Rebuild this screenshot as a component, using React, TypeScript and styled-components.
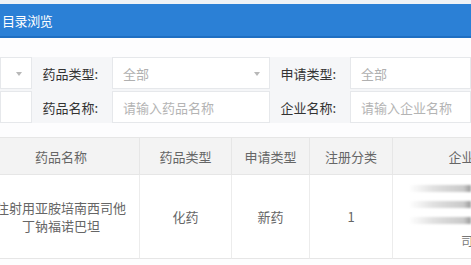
import React from "react";
import styled, { createGlobalStyle } from "styled-components";

const Global = createGlobalStyle`
  html, body { margin: 0; padding: 0; background: #ffffff; }
  body { font-family: "Microsoft YaHei", "Noto Sans CJK SC", "Noto Sans", sans-serif; }
  * { box-sizing: border-box; }
`;

const Page = styled.div`
  width: 471px;
  height: 265px;
  overflow: hidden;
  background: #fdfdfe;
  display: flex;
  flex-direction: column;
  align-items: flex-start;
`;

const TopStrip = styled.div`
  height: 4px;
  width: 100%;
  background: #eef2f6;
  flex: none;
`;

const TitleBar = styled.div`
  height: 34px;
  width: 100%;
  flex: none;
  background: #2b80d6;
  border-bottom: 2px solid #1f6fc2;
  display: flex;
  align-items: center;
  padding-left: 2px;
  color: #ffffff;
  font-size: 13px;
  letter-spacing: -0.4px;
`;

const Filters = styled.div`
  margin-top: 19px;
  width: 100%;
  display: flex;
  flex-direction: column;
  gap: 2px;
  background: #f5f6f8;
  flex: none;
`;

const FilterRow = styled.div`
  display: grid;
  grid-template-columns: 32px 80px 158px 80px 1fr;
  height: 32px;
`;

const Input = styled.div<{ $placeholder?: boolean }>`
  background: #ffffff;
  border: 1px solid #e6e8eb;
  display: flex;
  align-items: center;
  padding-left: 10px;
  position: relative;
  font-size: 13px;
  color: ${(p) => (p.$placeholder ? "#b4b4b4" : "#b0b0b0")};
  white-space: nowrap;
  overflow: hidden;
`;

const Arrow = styled.span`
  position: absolute;
  right: 9px;
  top: 14px;
  width: 0;
  height: 0;
  border-left: 3px solid transparent;
  border-right: 3px solid transparent;
  border-top: 4px solid #b8b8b8;
`;

const Label = styled.div`
  display: flex;
  align-items: center;
  justify-content: flex-end;
  padding-right: 14px;
  font-size: 13px;
  color: #333333;
  white-space: nowrap;
`;

const Table = styled.div`
  margin-top: 14px;
  margin-left: -17px;
  display: grid;
  grid-template-columns: 157px 92px 78px 83px 164px;
  width: max-content;
  flex: none;
  border-top: 1px solid #e6e6e6;
`;

const HeadCell = styled.div`
  height: 37px;
  background: #f3f3f3;
  border-right: 1px solid #e6e6e6;
  border-bottom: 1px solid #e6e6e6;
  display: flex;
  align-items: center;
  justify-content: center;
  font-size: 13px;
  color: #666666;
  white-space: nowrap;
`;

const BodyCell = styled.div`
  height: 84px;
  background: #ffffff;
  border-right: 1px solid #ececec;
  border-bottom: 1px solid #e6e6e6;
  display: flex;
  align-items: center;
  justify-content: center;
  text-align: center;
  font-size: 13px;
  line-height: 18px;
  color: #666666;
  padding: 0 10px;
`;

const CompanyCell = styled(BodyCell)`
  flex-direction: column;
  align-items: flex-end;
  justify-content: flex-start;
  padding: 10px 0 0 0;
  gap: 9px;
  border-right: none;
`;

const Blur = styled.div<{ $w: number }>`
  height: 7px;
  width: ${(p) => p.$w}px;
  background: linear-gradient(90deg, rgba(220, 220, 220, 0) 0%, #e0e0e0 40%, #c9c9c9 88%, #9a9a9a 100%);
  filter: blur(1px);
  margin-right: 86px;
`;

const Tail = styled.span`
  margin-right: 84px;
  margin-top: 1px;
  font-size: 12px;
  color: #777777;
  line-height: 14px;
`;

export default function App() {
  return (
    <>
      <Global />
      <Page>
        <TopStrip />
        <TitleBar>目录浏览</TitleBar>
        <Filters>
          <FilterRow>
            <Input>
              <Arrow />
            </Input>
            <Label>药品类型:</Label>
            <Input>
              全部
              <Arrow />
            </Input>
            <Label>申请类型:</Label>
            <Input>全部</Input>
          </FilterRow>
          <FilterRow>
            <Input />
            <Label>药品名称:</Label>
            <Input $placeholder>请输入药品名称</Input>
            <Label>企业名称:</Label>
            <Input $placeholder>请输入企业名称</Input>
          </FilterRow>
        </Filters>
        <Table>
          <HeadCell>药品名称</HeadCell>
          <HeadCell>药品类型</HeadCell>
          <HeadCell>申请类型</HeadCell>
          <HeadCell>注册分类</HeadCell>
          <HeadCell>企业名称</HeadCell>
          <BodyCell>注射用亚胺培南西司他丁钠福诺巴坦</BodyCell>
          <BodyCell>化药</BodyCell>
          <BodyCell>新药</BodyCell>
          <BodyCell>1</BodyCell>
          <CompanyCell>
            <Blur $w={62} />
            <Blur $w={62} />
            <Blur $w={62} />
            <Tail>司</Tail>
          </CompanyCell>
        </Table>
      </Page>
    </>
  );
}
